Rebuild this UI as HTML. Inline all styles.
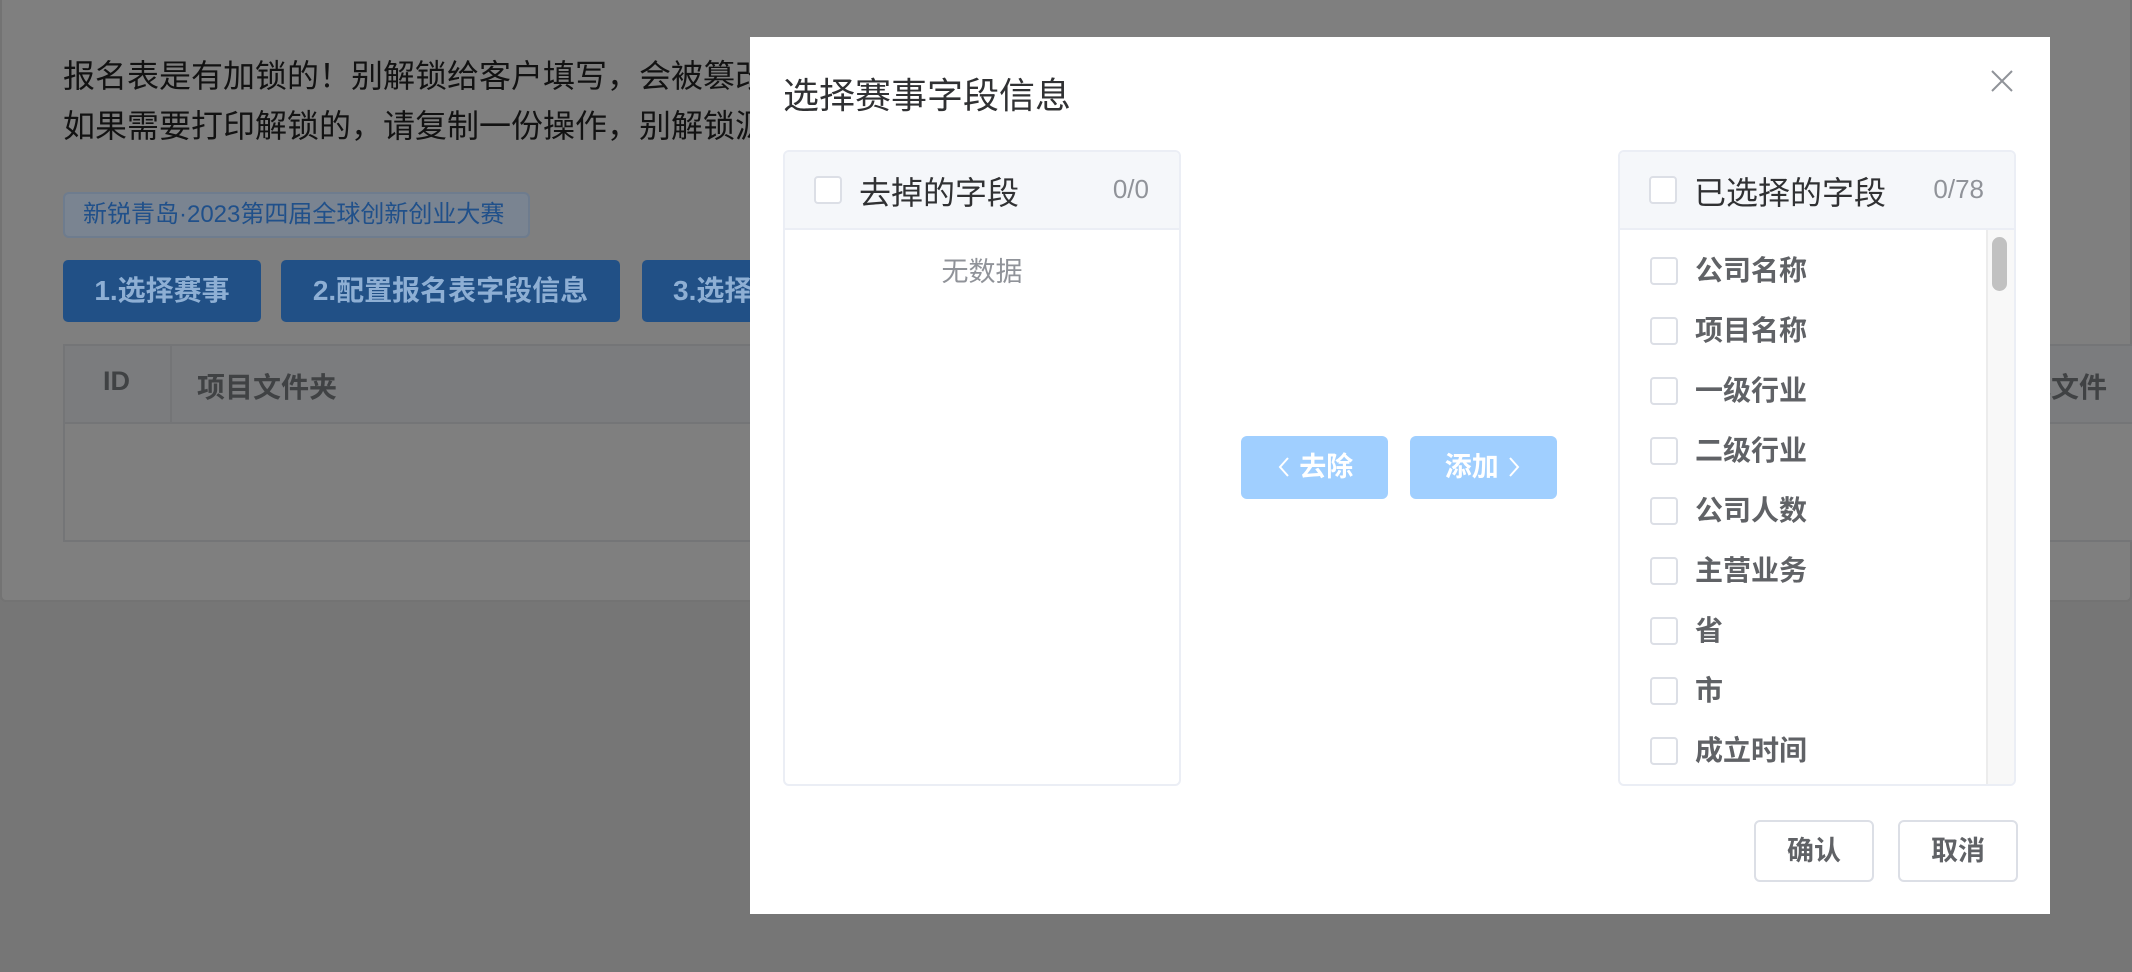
<!DOCTYPE html>
<html><head><meta charset="utf-8"><style>
*{box-sizing:border-box;margin:0;padding:0}
body{width:2132px;height:972px;overflow:hidden;position:relative;background:#767676;font-family:"Liberation Sans","Noto Sans CJK SC",sans-serif}
.abs{position:absolute}
.card{left:0;top:-10px;width:2132px;height:612px;background:#7f7f7f;border:2px solid #737373;border-radius:6px}
.t1{left:63px;font-size:32px;color:#121212;white-space:nowrap}
.tag{left:63px;top:192px;width:467px;height:46px;background:#7a8491;border:2px solid #6e7c8e;border-radius:6px;color:#20508a;font-size:24px;line-height:42px;padding-left:18px;white-space:nowrap}
.btn{top:260px;height:62px;background:#215086;color:#8eafd4;border-radius:5px;font-size:28px;font-weight:bold;line-height:62px;text-align:center;white-space:nowrap;overflow:hidden}
.tbl{left:63px;top:344px;width:2100px;height:198px;border:2px solid #747577;background:#7f7f7f}
.thead{left:0;top:0;right:0;height:78px;background:#7b7c7e;border-bottom:2px solid #747577}
.modal{left:750px;top:37px;width:1300px;height:877px;background:#fff}
.panel{top:113px;width:398px;height:636px;border:2px solid #ebeef5;border-radius:6px;background:#fff;overflow:hidden}
.ph{left:0;top:0;right:0;height:78px;background:#f5f7fa;border-bottom:2px solid #ebeef5}
.cb{width:28px;height:28px;border:2px solid #dcdfe6;border-radius:4px;background:#fff}
.item{left:30px;height:40px;font-size:28px;color:#606266;font-weight:bold;line-height:40px}
.item .cb{position:absolute;left:0;top:6px}
.item span{position:absolute;left:45px;white-space:nowrap}
.mbtn{top:399px;width:147px;height:63px;background:#a0cfff;border-radius:6px;color:#fff;font-size:27px;font-weight:bold;line-height:63px;text-align:center}
.mbtn svg{vertical-align:-3px}
.fbtn{top:783px;width:120px;height:62px;border:2px solid #dcdfe6;border-radius:6px;color:#606266;font-size:27px;font-weight:bold;line-height:58px;text-align:center}
</style></head><body>
<div class="abs card"></div>
<div class="abs t1" style="top:51px">报名表是有加锁的！别解锁给客户填写，会被篡改</div>
<div class="abs t1" style="top:101px">如果需要打印解锁的，请复制一份操作，别解锁源文件</div>
<div class="abs tag">新锐青岛·2023第四届全球创新创业大赛</div>
<div class="abs btn" style="left:63px;width:198px">1.选择赛事</div>
<div class="abs btn" style="left:281px;width:339px">2.配置报名表字段信息</div>
<div class="abs btn" style="left:642px;width:200px;text-align:left;padding-left:31px">3.选择</div>
<div class="abs tbl"><div class="abs thead"></div>
<div class="abs" style="left:105px;top:0;width:2px;height:78px;background:#747577"></div>
<div class="abs" style="left:38px;top:20px;font-size:27px;color:#404244;font-weight:bold">ID</div>
<div class="abs" style="left:132px;top:20px;font-size:28px;color:#404244;font-weight:bold">项目文件夹</div>
<div class="abs" style="left:1958px;top:20px;font-size:28px;color:#404244;font-weight:bold">充文件</div>
</div>
<div class="abs modal">
<div class="abs" style="left:33px;top:30px;font-size:36px;color:#303133">选择赛事字段信息</div>
<svg class="abs" style="left:1241px;top:33px" width="22" height="22" viewBox="0 0 22 22"><path d="M1 1L21 21M21 1L1 21" stroke="#909399" stroke-width="2"/></svg>
<div class="abs panel" style="left:33px">
 <div class="abs ph"><div class="abs cb" style="left:29px;top:24px"></div><div class="abs" style="left:74px;top:16px;font-size:32px;color:#303133">去掉的字段</div><div class="abs" style="right:30px;top:22px;font-size:26px;color:#909399">0/0</div></div>
 <div class="abs" style="left:0;right:0;top:98px;text-align:center;font-size:27px;color:#909399">无数据</div>
</div>
<div class="abs mbtn" style="left:491px"><svg width="16" height="24" viewBox="0 0 16 24"><path d="M12 3L4 12L12 21" fill="none" stroke="#fff" stroke-width="2"/></svg> 去除</div>
<div class="abs mbtn" style="left:660px">添加 <svg width="16" height="24" viewBox="0 0 16 24"><path d="M4 3L12 12L4 21" fill="none" stroke="#fff" stroke-width="2"/></svg></div>
<div class="abs panel" style="left:868px">
 <div class="abs ph"><div class="abs cb" style="left:29px;top:24px"></div><div class="abs" style="left:74px;top:16px;font-size:32px;color:#303133">已选择的字段</div><div class="abs" style="right:30px;top:22px;font-size:26px;color:#909399">0/78</div></div>
 <div class="abs" style="right:0;top:78px;width:28px;bottom:0;background:#f8f8f8;border-left:2px solid #ececec"></div>
 <div class="abs" style="right:7px;top:85px;width:15px;height:54px;background:#c1c1c1;border-radius:8px"></div>
 <div class="abs item" style="top:99px"><div class="cb"></div><span>公司名称</span></div>
 <div class="abs item" style="top:159px"><div class="cb"></div><span>项目名称</span></div>
 <div class="abs item" style="top:219px"><div class="cb"></div><span>一级行业</span></div>
 <div class="abs item" style="top:279px"><div class="cb"></div><span>二级行业</span></div>
 <div class="abs item" style="top:339px"><div class="cb"></div><span>公司人数</span></div>
 <div class="abs item" style="top:399px"><div class="cb"></div><span>主营业务</span></div>
 <div class="abs item" style="top:459px"><div class="cb"></div><span>省</span></div>
 <div class="abs item" style="top:519px"><div class="cb"></div><span>市</span></div>
 <div class="abs item" style="top:579px"><div class="cb"></div><span>成立时间</span></div>
</div>
<div class="abs fbtn" style="left:1004px">确认</div>
<div class="abs fbtn" style="left:1148px">取消</div>
</div>
</body></html>
